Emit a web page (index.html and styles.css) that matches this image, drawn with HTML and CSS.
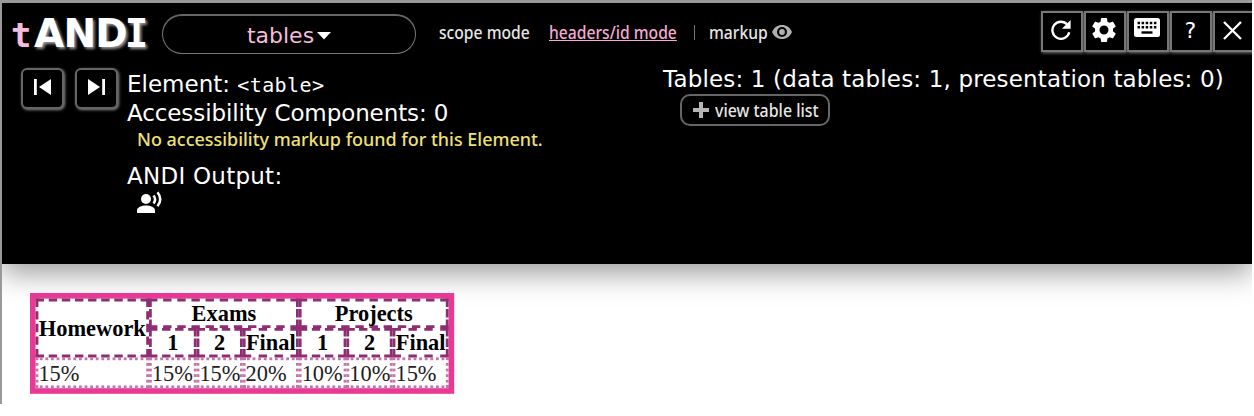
FILE: index.html
```html
<!DOCTYPE html>
<html lang="en">
<head>
<meta charset="utf-8">
<title>tANDI</title>
<link rel="stylesheet" href="styles.css">
</head>
<body>
<div class="window">
  <section class="andi">
    <header class="bar">
      <h1 class="logo"><span class="logo-t">t</span><span class="logo-name">AND<span class="logo-i">I</span></span></h1>
      <button class="module"><span class="module-text">tables</span><svg width="14" height="8" viewBox="0 0 14 8"><path d="M0 0h14L7 7.500z" fill="#fff"/></svg></button>
      <nav class="modes">
        <span class="fit w-scope"><span class="narrow">scope mode</span></span>
        <span class="fit w-headers"><span class="narrow active">headers/id mode</span></span>
        <span class="divider"></span>
        <span class="fit w-markup"><span class="narrow">markup</span></span>
        <svg class="eye" width="22" height="16" viewBox="0 0 22 16"><path d="M1 8C3 3.500 6.500 1 11 1s8 2.500 10 7c-2 4.500-5.500 7-10 7S3 12.500 1 8z" fill="#b0b0b0"/><circle cx="11" cy="8" r="5" fill="#000"/><circle cx="11" cy="8" r="2.900" fill="#b0b0b0"/></svg>
      </nav>
      <div class="tools">
        <button class="tool"><svg width="22" height="22" viewBox="0 0 24 24"><path d="M19 6.200A9.300 9.300 0 1 0 21 14.500" fill="none" stroke="#fff" stroke-width="2.600"/><path d="M22.500 1v9.500h-9.500z" fill="#fff"/></svg></button>
        <button class="tool"><svg width="30" height="30" viewBox="0 0 24 24"><path fill="#fff" d="M19.140 12.940c.04-.3.060-.61.060-.94s-.02-.64-.07-.94l2.030-1.580a.49.49 0 0 0 .12-.61l-1.920-3.320a.49.49 0 0 0-.59-.22l-2.390.96a7 7 0 0 0-1.620-.94l-.36-2.540a.48.48 0 0 0-.48-.41h-3.840a.48.48 0 0 0-.47.41l-.36 2.540c-.59.24-1.130.57-1.620.94l-2.390-.96a.49.49 0 0 0-.59.22L2.740 8.870a.48.48 0 0 0 .12.61l2.030 1.580a6 6 0 0 0 0 1.880l-2.030 1.580a.49.49 0 0 0-.12.61l1.920 3.320c.12.22.37.29.59.22l2.390-.96c.5.38 1.030.7 1.620.94l.36 2.540c.05.24.24.41.48.41h3.840c.24 0 .44-.17.47-.41l.36-2.540c.59-.24 1.130-.56 1.620-.94l2.390.96c.22.08.47 0 .59-.22l1.920-3.320a.48.48 0 0 0-.12-.61zM12 15.600a3.600 3.600 0 1 1 0-7.200 3.600 3.600 0 0 1 0 7.200z"/></svg></button>
        <button class="tool tool-keys"><svg width="26" height="19" viewBox="0 0 26 19"><rect width="26" height="19" rx="2.500" fill="#fff"/><path d="M3.500 5h19M3.500 9.200h19" stroke="#000" stroke-width="2.500" stroke-dasharray="2.500 1.600"/><path d="M7.500 14.500h11" stroke="#000" stroke-width="2.400"/></svg></button>
        <button class="tool"><span class="help">?</span></button>
        <button class="tool tool-close"><svg width="19" height="19" viewBox="0 0 19 19"><path d="M1 1l17 17M18 1L1 18" stroke="#fff" stroke-width="2.300"/></svg></button>
      </div>
    </header>
    <main class="details">
      <div class="steps">
        <button class="step"><svg width="17" height="16" viewBox="0 0 17 16"><path d="M0 0h2.800v16H0zM17 0v16L5 8z" fill="#fff"/></svg></button>
        <button class="step"><svg width="17" height="16" viewBox="0 0 17 16"><path d="M14.200 0H17v16h-2.800zM0 0v16l12-8z" fill="#fff"/></svg></button>
      </div>
      <div class="element">
        <p class="line line-element">Element: <code class="tag">&lt;table&gt;</code></p>
        <p class="line line-components">Accessibility Components: 0</p>
        <p class="warning"><span class="narrow">No accessibility markup found for this Element.</span></p>
        <p class="line line-output">ANDI Output:</p>
        <svg class="voice" width="27" height="23" viewBox="0 0 27 23"><circle cx="10" cy="8" r="5" fill="#fff"/><path d="M1 22v-2.500c0-3.200 4.500-5 9-5s9 1.800 9 5V22z" fill="#fff"/><path d="M17.500 4.500q3.200 4 0 8M21.500 1.200q5.500 7 0 14" fill="none" stroke="#fff" stroke-width="2.500"/></svg>
      </div>
      <div class="summary">
        <p class="line line-summary">Tables: 1 (data tables: 1, presentation tables: 0)</p>
        <button class="list"><svg width="16" height="16" viewBox="0 0 16 16"><path d="M0 8h16M8 0v16" stroke="#b5b5b5" stroke-width="4"/></svg><span class="fit w-list"><span class="narrow">view table list</span></span></button>
      </div>
    </main>
  </section>
  <div class="content">
    <table class="grades">
      <colgroup><col class="c-homework"><col class="c-one"><col class="c-two"><col class="c-final"><col class="c-one"><col class="c-two"><col class="c-final"></colgroup>
      <tr><th rowspan="2">Homework</th><th colspan="3">Exams</th><th colspan="3">Projects</th></tr>
      <tr><th>1</th><th>2</th><th>Final</th><th>1</th><th>2</th><th>Final</th></tr>
      <tr class="scores"><td>15%</td><td>15%</td><td>15%</td><td>20%</td><td>10%</td><td>10%</td><td>15%</td></tr>
    </table>
  </div>
</div>
</body>
</html>
```
FILE: styles.css
```css
* { box-sizing: border-box; }
body { margin: 0; background: #fff; overflow: hidden; font-family: "DejaVu Sans", Verdana, sans-serif; }
p, h1 { margin: 0; }
button { background: #000; color: #fff; padding: 0; font: inherit; }
svg { display: block; flex: none; }
.window { width: 1252px; height: 404px; border-left: 2px solid #999; border-top: 3px solid #999; overflow: hidden; }
.andi { height: 261px; background: #000; color: #fff; box-shadow: 0 8px 28px rgba(0, 0, 0, .42); }
.bar { display: flex; height: 62px; }
.logo { display: flex; align-items: baseline; width: 160px; padding-left: 9px; line-height: 61px; font-size: 38px; }
.logo-t { width: 23px; color: #f5bcdc; font-family: "DejaVu Sans Mono", monospace; font-size: 34px; }
.logo-name { font-size: 39px; letter-spacing: -0.8px; text-shadow: 2px 2px 3px #999; }
.logo-i { margin-left: -2px; font-family: "DejaVu Sans Mono", monospace; }
.module { display: flex; align-items: center; justify-content: center; gap: 3px; width: 254px; height: 40px; margin-top: 11px; padding-top: 2px; border: 1px solid #777; border-top: 2px solid #666; border-radius: 20px; }
.module-text { color: #f5bcdc; font-size: 22px; line-height: 30px; }
.modes { display: flex; align-items: center; height: 60px; margin-left: 23px; padding-bottom: 2px; }
.fit { display: block; white-space: nowrap; }
.narrow { display: inline-block; white-space: nowrap; font: 500 18px/22px "Noto Sans", sans-serif; transform: scaleX(.87); transform-origin: left; color: #e6e6e6; }
.w-scope { width: 110px; }
.w-headers { width: 145px; }
.active { color: #f5a9d3; text-decoration: underline; }
.divider { width: 1px; height: 15px; margin-right: 14px; background: #776; }
.w-markup { width: 62px; }
.tools { display: flex; gap: 1px; margin-left: auto; margin-right: -3px; padding-top: 8px; }
.tool { display: flex; align-items: center; justify-content: center; width: 42px; height: 41px; padding: 0 2px 3px 0; border: 2px solid #777; box-shadow: 1px 1px 3px #777; }
.tool-keys { padding-bottom: 8px; }
.tool-close { padding-right: 3px; }
.help { padding-top: 2px; font: 22px/26px "DejaVu Sans Mono", monospace; }
.details { display: flex; padding-top: 3px; }
.steps { display: flex; gap: 11px; width: 125px; padding-left: 19px; }
.step { width: 43px; height: 41px; display: flex; align-items: center; justify-content: center; padding-bottom: 3px; border: 2px solid #666; border-radius: 6px; box-shadow: 1px 1px 3px #888; }
.element { width: 536px; padding-top: 2px; }
.line { white-space: nowrap; font-size: 23px; line-height: 28px; }
.line-components { letter-spacing: -0.1px; }
.line-output { margin-top: 10px; letter-spacing: .25px; }
.line-summary { letter-spacing: .16px; }
.tag { font: 20px/28px "DejaVu Sans Mono", monospace; letter-spacing: .4px; }
.warning { height: 25px; padding: 1px 0 0 10px; }
.warning .narrow { color: #f0e077; transform: scaleX(.997); }
.voice { margin: 1px 0 0 9px; }
.summary { margin-top: -3px; }
.list { display: flex; align-items: center; gap: 6px; width: 150px; height: 32px; margin: 1px 0 0 17px; padding-left: 11px; border: 2px solid #666; border-radius: 10px; }
.w-list { width: 106px; text-align: left; }
.w-list .narrow { transform: scaleX(.885); }
.content { padding: 29px 0 0 28px; }
/* Page content is shown at 140% */
.grades { box-sizing: border-box; table-layout: fixed; width: 303px; border: 4px solid #e83994; border-spacing: 0; background: #fff; font: 16px/17px "Liberation Serif", serif; color: #000; transform: scale(1.4); transform-origin: top left; }
.grades th, .grades td { height: 21px; padding: 0; white-space: nowrap; border: 2px dashed #8f2d73; }
.grades td { height: 22px; border: 2px dotted #c774a8; text-align: left; color: #222; }
.c-homework { width: 81px; }
.c-one { width: 34px; }
.c-two { width: 33px; }
.c-final { width: 40px; }
```
